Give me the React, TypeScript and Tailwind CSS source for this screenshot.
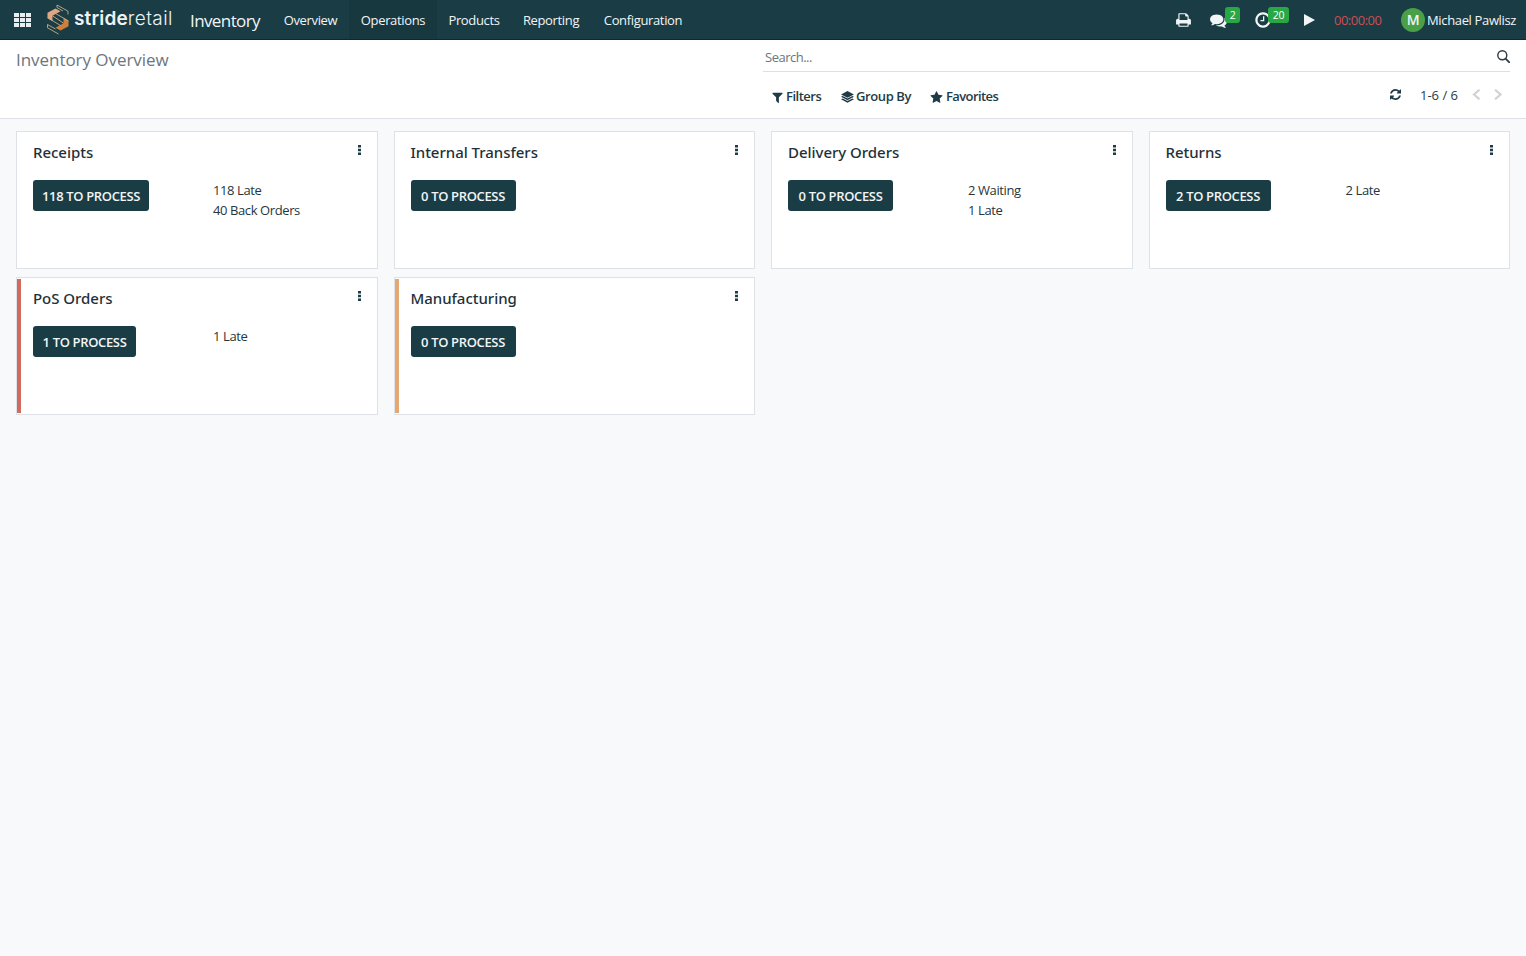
import type { ReactNode } from "react";

type IconProps = { d: string; className: string; viewBox?: string };

function Icon({ d, className, viewBox = "0 0 1792 1792" }: IconProps) {
  return (
    <svg className={`shrink-0 ${className}`} viewBox={viewBox} fill="currentColor">
      <path d={d} />
    </svg>
  );
}

const PRINT =
  "M384 1536h896v-256h-896v256zM384 896h896v-384h-160q-40 0-68-28t-28-68v-160h-640v640zM1664 960v416q0 13-9.500 22.500t-22.500 9.500h-224v160q0 40-28 68t-68 28h-960q-40 0-68-28t-28-68v-160h-224q-13 0-22.500-9.500t-9.500-22.500v-416q0-79 56.500-135.500t135.500-56.500h64v-544q0-40 28-68t68-28h672q40 0 88 20t76 48l152 152q28 28 48 76t20 88v256h64q79 0 135.500 56.500t56.500 135.500z";
const COMMENTS =
  "M1408 768q0 139-94 257t-256.500 186.500-353.500 68.500q-86 0-176-16-124 88-278 128-36 9-86 16h-3q-11 0-20.500-8t-11.500-21q-1-3-1-6.500t.5-6.500 2-6l2.500-5 3.500-5.500 4-5 4.500-5 4-4.500q5-6 23-25t26-29.500 22.500-29 25-38.500 20.500-44q-124-72-195-177t-71-224q0-139 94-257t256.500-186.500 353.500-68.500 353.500 68.500 256.500 186.500 94 257zm384 256q0 120-71 224.500t-195 176.500q10 24 20.500 44t25 38.500 22.500 29 26 29.500 23 25q1 1 4 4.500t4.500 5 4 5 3.500 5.500l2.500 5 2 6 .5 6.500-1 6.500q-3 14-13 22t-22 7q-50-7-86-16-154-40-278-128-90 16-176 16-271 0-472-132 58 4 88 4 161 0 309-45t264-129q125-92 192-212t67-254q0-77-23-152 129 71 204 178t75 230z";
const CLOCK =
  "M1024 544v448q0 14-9 23t-23 9h-320q-14 0-23-9t-9-23v-64q0-14 9-23t23-9h224v-352q0-14 9-23t23-9h64q14 0 23 9t9 23zm416 352q0-148-73-273t-198-198-273-73-273 73-198 198-73 273 73 273 198 198 273 73 273-73 198-198 73-273zm224 0q0 209-103 385.500t-279.500 279.500-385.500 103-385.500-103-279.500-279.500-103-385.500 103-385.500 279.500-279.500 385.500-103 385.500 103 279.500 279.500 103 385.500z";
const FILTER =
  "M1595 295q17 41-14 70l-493 493v742q0 42-39 59-13 5-25 5-27 0-45-19l-256-256q-19-19-19-45v-486l-493-493q-31-29-14-70 17-39 59-39h1280q42 0 59 39z";
const STAR =
  "M1728 647q0 22-26 48l-363 354 86 500q1 7 1 20 0 21-10.500 35.500t-30.500 14.500q-19 0-40-12l-449-236-449 236q-22 12-40 12-21 0-31.500-14.500t-10.500-35.500q0-6 2-20l86-500-364-354q-25-27-25-48 0-37 56-46l502-73 225-455q19-41 49-41t49 41l225 455 502 73q56 9 56 46z";
const REFRESH =
  "M1511 928q0 5-1 7-64 268-268 434.500t-478 166.500q-146 0-282.500-55t-243.500-157l-129 129q-19 19-45 19t-45-19-19-45v-448q0-26 19-45t45-19h448q26 0 45 19t19 45-19 45l-137 137q71 66 161 102t187 36q134 0 250-65t186-179q11-17 53-117 8-23 30-23h192q13 0 22.500 9.500t9.500 22.500zm25-800v448q0 26-19 45t-45 19h-448q-26 0-45-19t-19-45 19-45l138-138q-148-137-349-137-134 0-250 65t-186 179q-11 17-53 117-8 23-30 23h-199q-13 0-22.500-9.500t-9.500-22.500v-7q65-268 270-434.500t480-166.500q146 0 284 55.500t245 156.500l130-129q19-19 45-19t45 19 19 45z";
const LAYERS =
  "M7 0l7 3.700-7 3.700-7-3.700zM0 6.300l1.700-.9 5.300 2.800 5.300-2.800 1.700.9-7 3.700zM0 9l1.700-.9 5.300 2.800 5.300-2.800 1.700.9-7 3.700z";
const APPS =
  "M0 0h5v4h-5zM6 0h5v4h-5zM12 0h5v4h-5zM0 5h5v4h-5zM6 5h5v4h-5zM12 5h5v4h-5zM0 10h5v4h-5zM6 10h5v4h-5zM12 10h5v4h-5z";

type Operation = {
  name: string;
  count: number;
  buttonWidth: string;
  stats?: string[];
  stripe?: string;
};

const operations: Operation[] = [
  { name: "Receipts", count: 118, buttonWidth: "w-[116px]", stats: ["118 Late", "40 Back Orders"] },
  { name: "Internal Transfers", count: 0, buttonWidth: "w-[105px]" },
  { name: "Delivery Orders", count: 0, buttonWidth: "w-[105px]", stats: ["2 Waiting", "1 Late"] },
  { name: "Returns", count: 2, buttonWidth: "w-[105px]", stats: ["2 Late"] },
  { name: "PoS Orders", count: 1, buttonWidth: "w-[103px]", stats: ["1 Late"], stripe: "bg-[#d16b60]" },
  { name: "Manufacturing", count: 0, buttonWidth: "w-[105px]", stripe: "bg-[#e3a873]" },
];

const menu = [
  { label: "Overview", className: "w-[77px]" },
  { label: "Operations", className: "w-[88px] bg-[#183840]" },
  { label: "Products", className: "w-[74px]" },
  { label: "Reporting", className: "w-[80px]" },
  { label: "Configuration", className: "w-[104px]" },
];

function Logo() {
  return (
    <div className="ml-[15px] flex items-center">
      <svg className="h-[31px] w-6 shrink-0" viewBox="0 0 24 31" fill="none">
        <path d="M1.500 8.700L9.500 4.500l5 2.700-8 4.600v5.400l-5-3z" fill="#dfa784" />
        <path d="M22.500 22.300L14.500 26.500l-5-2.700 8-4.600v-5.400l5 3z" fill="#cf7f3c" />
        <path
          d="M11 1l11 6.200v3.300M11 1v2.500l6 3.500M6.500 11.800l11 7.400M9.500 9.500l13 7.500M1.500 13.500l13 8M1.500 20.500v3.300L12.500 30M1.500 20.500l8 4.500"
          stroke="#c4ae8c"
          strokeWidth="0.900"
        />
      </svg>
      <div className="-mt-px ml-[4px] w-[99px] whitespace-nowrap text-[19px] leading-6 text-[#eef3f4] font-['Inter','Noto_Sans',sans-serif]">
        <span className="font-semibold tracking-[0.15px]">stride</span>
        <span className="font-light tracking-[0.4px]">retail</span>
      </div>
    </div>
  );
}

function Badge({ children, className }: { children: ReactNode; className: string }) {
  return (
    <span
      className={`z-10 -mt-[9px] flex h-4 items-center justify-center rounded-[3px] bg-[#28a745] pt-px text-[10.500px] text-white ${className}`}
    >
      {children}
    </span>
  );
}

function Navbar() {
  return (
    <header className="flex h-10 items-center border-b border-[#10272d] bg-[#1a3c45] text-[13px] tracking-[-0.35px] text-[#f1f5f6]">
      <Icon d={APPS} viewBox="0 0 17 14" className="ml-[14px] h-[14px] w-[17px] text-[#e8edf0]" />
      <Logo />
      <span className="ml-[17px] w-[82px] whitespace-nowrap pt-0.5 text-[17px] tracking-[-0.6px]">Inventory</span>
      <nav className="flex h-full">
        {menu.map((item) => (
          <a key={item.label} className={`flex items-center justify-center whitespace-nowrap pt-0.5 ${item.className}`}>
            {item.label}
          </a>
        ))}
      </nav>

      {/* Systray */}
      <div className="ml-auto flex h-full items-center">
        <Icon d={PRINT} viewBox="0 0 1664 1792" className="h-4 w-[15px]" />
        <Icon d={COMMENTS} className="ml-[19px] mt-0.5 h-[17px] w-[17px]" />
        <Badge className="-ml-[2px] w-[15px]">2</Badge>
        <Icon d={CLOCK} className="ml-[14px] mt-px h-[18px] w-[18px]" />
        <Badge className="-ml-[4px] w-[21px]">20</Badge>
        <Icon d="M0 0l11 6-11 6z" viewBox="0 0 11 12" className="ml-[15px] mt-px h-3 w-[11px]" />
        <span className="ml-[19px] w-12 whitespace-nowrap pt-0.5 tracking-[-0.5px] text-[#c94f55]">00:00:00</span>
        <span className="ml-[19px] flex size-6 items-center justify-center rounded-full bg-[#4a9f49] text-[14px] font-semibold">
          M
        </span>
        <span className="ml-[2px] mr-[9px] w-[90px] whitespace-nowrap pt-0.5">Michael Pawlisz</span>
      </div>
    </header>
  );
}

function ControlPanel() {
  return (
    <section className="flex h-[79px] border-b border-[#dee2e6] bg-white pl-4 pr-4">
      <h1 className="mt-[7px] w-[747px] text-[17px] leading-[26px] tracking-[-0.05px] text-[#6c757d]">
        Inventory Overview
      </h1>
      <div className="flex flex-1 flex-col">
        <div className="flex h-8 items-center justify-between border-b border-[#dce0e4] pl-0.5">
          <span className="mt-[5px] text-[13px] tracking-[-0.5px] text-[#6c757d]">Search...</span>
          <svg className="mt-px h-[13px] w-[13px] text-[#2f3b44]" viewBox="0 0 13 13" fill="none" stroke="currentColor">
            <circle cx="5.300" cy="5.300" r="4.500" strokeWidth="1.400" />
            <path d="M8.600 8.600l3.700 3.700" strokeWidth="1.800" strokeLinecap="round" />
          </svg>
        </div>
        <div className="flex h-[46px] items-center text-[13px] text-[#1f3b45]">
          <div className="flex items-center pl-[8px] pt-[4px] font-semibold tracking-[-0.5px]">
            <Icon d={FILTER} className="h-[13px] w-[13px]" />
            <span className="ml-[2px] w-[55px] whitespace-nowrap">Filters</span>
            <Icon d={LAYERS} viewBox="0 0 14 13" className="h-[12px] w-[13px]" />
            <span className="ml-[2px] w-[74px] whitespace-nowrap tracking-[-0.4px]">Group By</span>
            <Icon d={STAR} className="h-[13px] w-[13px]" />
            <span className="ml-[3px] whitespace-nowrap tracking-[-0.6px]">Favorites</span>
          </div>
          <div className="ml-auto flex items-center pr-[8px]">
            <Icon d={REFRESH} viewBox="0 0 1536 1536" className="-mt-0.5 h-[11px] w-[11px]" />
            <span className="ml-[19px] w-[39px] whitespace-nowrap pt-px">1-6 / 6</span>
            <svg
              className="-mt-[2px] ml-[13px] h-[11px] w-[30px] text-[#d0d3d6]"
              viewBox="0 0 30 11"
              fill="none"
              stroke="currentColor"
              strokeWidth="2.200"
            >
              <path d="M7.500 0.700L2 5.500l5.500 4.800M23 0.700l5.500 4.800-5.500 4.800" />
            </svg>
          </div>
        </div>
      </div>
    </section>
  );
}

function OperationCard({ name, count, buttonWidth, stats = [], stripe }: Operation) {
  return (
    <article className="relative h-[138px] border border-[#dee2e6] bg-white pl-4 pr-4">
      {stripe && <div className={`absolute bottom-px left-0 top-px w-1 ${stripe}`} />}
      <div className="flex justify-between pt-[8px]">
        <h2 className="text-[15px] font-medium leading-6 tracking-[-0.03px] text-[#1f3138] font-['Noto_Sans','Open_Sans',sans-serif]">
          {name}
        </h2>
        <Icon
          d="M0 0h3v2.600h-3zM0 3.700h3v2.600h-3zM0 7.400h3v2.600h-3z"
          viewBox="0 0 3 10"
          className="mt-[5px] h-[10px] w-[3px] text-[#1f3b45]"
        />
      </div>
      <div className="flex pt-[16px]">
        <div className="w-[180px]">
          <button
            className={`h-[31px] whitespace-nowrap rounded-[3px] bg-[#1a3c45] pt-0.5 text-[13px] font-semibold tracking-[-0.35px] text-[#f1f5f6] ${buttonWidth}`}
          >
            {count} TO PROCESS
          </button>
        </div>
        <div className="text-[13px] leading-5 tracking-[-0.4px] text-[#26363d]">
          {stats.map((stat) => (
            <p key={stat}>{stat}</p>
          ))}
        </div>
      </div>
    </article>
  );
}

export default function App() {
  return (
    <div className="min-h-screen bg-[#f8f9fb] font-['Open_Sans','Noto_Sans',sans-serif]">
      <Navbar />
      <ControlPanel />
      <main className="grid grid-cols-4 gap-x-4 gap-y-2 px-4 pt-3">
        {operations.map((operation) => (
          <OperationCard key={operation.name} {...operation} />
        ))}
      </main>
    </div>
  );
}
